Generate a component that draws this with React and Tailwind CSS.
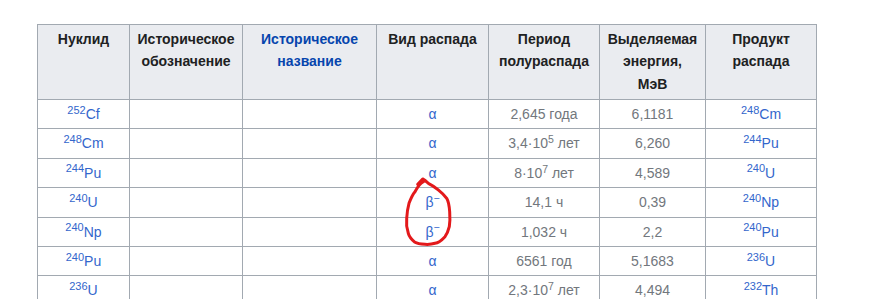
const rows = [
  { n: ['252', 'Cf'], d: 'α', t: <>2,645 года</>, e: '6,1181', p: ['248', 'Cm'] },
  { n: ['248', 'Cm'], d: 'α', t: <>3,4·10<sup>5</sup> лет</>, e: '6,260', p: ['244', 'Pu'] },
  { n: ['244', 'Pu'], d: 'α', t: <>8·10<sup>7</sup> лет</>, e: '4,589', p: ['240', 'U'] },
  { n: ['240', 'U'], d: 'β', t: <>14,1 ч</>, e: '0,39', p: ['240', 'Np'] },
  { n: ['240', 'Np'], d: 'β', t: <>1,032 ч</>, e: '2,2', p: ['240', 'Pu'] },
  { n: ['240', 'Pu'], d: 'α', t: <>6561 год</>, e: '5,1683', p: ['236', 'U'] },
  { n: ['236', 'U'], d: 'α', t: <>2,3·10<sup>7</sup> лет</>, e: '4,494', p: ['232', 'Th'] },
]

const Nuc = ({ v }) => (
  <span className="text-[#3366cc]">
    <sup className="text-[11px]">{v[0]}</sup>
    {v[1]}
  </span>
)

const th = 'border border-[#a2a9b1] bg-[#eaecf0] px-[6px] pt-[3px] pb-[3px] align-top font-bold text-center'
const td = 'border border-[#a2a9b1] px-[6px] py-[3px] text-center align-middle'

export default function App() {
  return (
    <div className="relative w-[893px] h-[299px] overflow-hidden bg-white font-['Liberation_Sans',Arial,sans-serif] text-[14px] leading-[22.4px] text-[#202122]">
      <div className="pt-[24px] pl-[37px]">
        <table className="border-collapse">
          <thead>
            <tr className="h-[75px]">
              <th className={`${th} w-[92px]`}>Нуклид</th>
              <th className={`${th} w-[113px]`}>Историческое обозначение</th>
              <th className={`${th} w-[134px] text-[#0645ad]`}>Историческое название</th>
              <th className={`${th} w-[112px]`}>Вид распада</th>
              <th className={`${th} w-[111px]`}>Период полураспада</th>
              <th className={`${th} w-[106px]`}>Выделяемая<br />энергия,<br />МэВ</th>
              <th className={`${th} w-[111px]`}>Продукт распада</th>
            </tr>
          </thead>
          <tbody>
            {rows.map((r, i) => (
              <tr key={i} className="h-[29px]">
                <td className={td}><Nuc v={r.n} /></td>
                <td className={td}></td>
                <td className={td}></td>
                <td className={`${td} text-[#3366cc]`}>
                  {r.d === 'β' ? <>β<sup>−</sup></> : 'α'}
                </td>
                <td className={`${td} text-[#72777d]`}>{r.t}</td>
                <td className={`${td} text-[#72777d]`}>{r.e}</td>
                <td className={td}><Nuc v={r.p} /></td>
              </tr>
            ))}
          </tbody>
        </table>
      </div>

      {/* hand-drawn mark around the beta rows */}
      <svg className="absolute inset-0 pointer-events-none" width="893" height="299">
        <path
          d="M417.7 184.3 L422.7 179 Q425 180 428.3 183.3 C434 186 443 193 446.7 198.3 C450 204 450.5 219 449.3 226.7 C448 232 447 234 445 236.7 C441 241 438 243 435 243.3 C431 244.5 428 244.5 425 244.3 C420 244 417 243.5 415 242.3 C411 239 409 236 408.3 233.3 C406.5 228 406.3 222 406.7 218.3 C407 212 408 207 409 203.3 C411 198 413 194 415 191.7 C417 188 419 185 421 183.3 L424.3 181"
          fill="none"
          stroke="#e3191b"
          strokeWidth="3"
          strokeLinecap="round"
          strokeLinejoin="round"
        />
      </svg>
    </div>
  )
}
